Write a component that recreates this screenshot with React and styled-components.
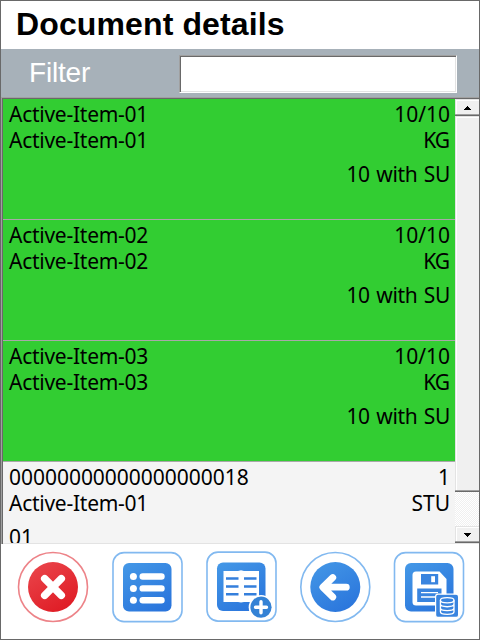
import React from "react";
import styled, { createGlobalStyle } from "styled-components";

const GlobalStyle = createGlobalStyle`
  *, *::before, *::after { box-sizing: border-box; }
  body { margin: 0; background: #fff; }
`;

const Screen = styled.main`
  width: 480px;
  height: 640px;
  display: flex;
  flex-direction: column;
  border: 1px solid #696969;
  background: #fff;
  overflow: hidden;
`;

const Title = styled.h1`
  flex: none;
  height: 48px;
  margin: 0;
  padding-left: 15px;
  font: bold 32px/46px "Liberation Sans", Arial, sans-serif;
  letter-spacing: 0.12px;
  color: #000;
  white-space: nowrap;
`;

const FilterBar = styled.div`
  flex: none;
  height: 48px;
  display: flex;
  align-items: flex-start;
  background: #a7b1b9;
`;

const FilterLabel = styled.label`
  width: 178px;
  padding-left: 28px;
  font: 28px/48px "Liberation Sans", Arial, sans-serif;
  letter-spacing: -0.2px;
  color: #fff;
`;

const FilterInput = styled.input`
  width: 278px;
  height: 38px;
  margin-top: 6px;
  padding: 0 4px;
  border: 1px solid;
  border-color: #a0a0a0 #fff #fff #a0a0a0;
  border-radius: 0;
  outline: none;
  background: #fff;
  box-shadow: inset 1px 1px #696969, inset -1px -1px #e3e3e3;
  font: 22px "Liberation Sans", Arial, sans-serif;
`;

const ListFrame = styled.section`
  flex: none;
  height: 447px;
  display: flex;
  padding: 2px 0 1px 2px;
  background: #f4f4f4;
  box-shadow: inset 1px 1px #a0a0a0, inset 2px 2px #696969, inset 0 -1px #e3e3e3;
`;

const Rows = styled.div`
  width: 452px;
  height: 444px;
  overflow: hidden;
`;

const Row = styled.article`
  height: 121px;
  padding: 2px 5px 0 6px;
  border-bottom: 1px solid #a8a8a8;
  background: ${(p) => (p.$complete ? "#32cd32" : "#f4f4f4")};
`;

const Line = styled.div`
  height: 26px;
  margin-top: ${(p) => (p.$spaced ? 8 : 0)}px;
  display: flex;
  justify-content: space-between;
  font: 21px/26px "Noto Sans", Tahoma, sans-serif;
  color: #000;
  white-space: nowrap;
`;

const Cell = styled.span`
  letter-spacing: ${(p) => p.$tracking || 0}px;
`;

const Unit = styled(Cell)`
  letter-spacing: ${(p) => (p.$narrow ? -1 : 0)}px;
  margin-right: ${(p) => (p.$narrow ? 1 : 0)}px;
`;

const Note = styled(Cell)`
  letter-spacing: -0.35px;
  word-spacing: 1.4px;
`;

const Scrollbar = styled.div`
  width: 24px;
  height: 444px;
  display: flex;
  flex-direction: column;
  background: repeating-conic-gradient(#f0f0f0 0% 25%, #fff 0% 50%) 0 0 / 2px 2px;
`;

const ScrollPart = styled.div`
  flex: none;
  height: ${(p) => p.$height}px;
  display: flex;
  align-items: center;
  justify-content: center;
  background: #f0f0f0;
  box-shadow: inset 0 -1px #696969, inset 0 -2px #a0a0a0, inset 1px 1px #e3e3e3, inset 2px 2px #fff;
`;

const Track = styled.div`
  flex: 1;
`;

const Toolbar = styled.nav`
  flex: 1;
  display: flex;
  gap: 22px;
  padding: 7px 0 0 16px;
`;

const ToolButton = styled.button`
  flex: none;
  width: 72px;
  height: 72px;
  padding: 0;
  border: 0;
  background: none;

  svg { display: block; }
`;

const items = [
  { code: "Active-Item-01", name: "Active-Item-01", qty: "10/10", unit: "KG", note: "10 with SU", complete: true },
  { code: "Active-Item-02", name: "Active-Item-02", qty: "10/10", unit: "KG", note: "10 with SU", complete: true },
  { code: "Active-Item-03", name: "Active-Item-03", qty: "10/10", unit: "KG", note: "10 with SU", complete: true },
  { code: "00000000000000000018", name: "Active-Item-01", qty: "1", unit: "STU", batch: "01" },
];

function Arrow({ down }) {
  return (
    <svg width="7" height="4" shapeRendering="crispEdges">
      <path d={down ? "M0 0h7v1h-1v1h-1v1h-1v1h-1v-1h-1v-1h-1v-1h-1z" : "M3 0h1v1h1v1h1v1h1v1h-7v-1h1v-1h1v-1h1z"} />
    </svg>
  );
}

function Icon({ id, red, round, left = 1.5, dx = 0, dy = 0, children }) {
  const edge = red ? "#ed8388" : "#82b9f0";
  return (
    <svg width="72" height="72" viewBox={`${-dx} ${-dy} 72 72`} fill="none" overflow="visible">
      <defs>
        <linearGradient id={id} x1="0.15" y1="0" x2="0.75" y2="1">
          <stop stopColor={red ? "#ea454b" : "#4396e6"} />
          <stop offset="1" stopColor={red ? "#df1b24" : "#2a75dc"} />
        </linearGradient>
      </defs>
      {round ? (
        <>
          <circle cx="36" cy="36" r="34.5" stroke={edge} strokeWidth="1.6" />
          <circle cx="36" cy="36" r="25" fill={`url(#${id})`} />
        </>
      ) : (
        <>
          <rect x={left} y="1.6" width="69" height="69" rx="11" stroke={edge} strokeWidth="1.6" />
          <rect x="12" y="12" width="48.5" height="48.5" rx="6" fill={`url(#${id})`} />
        </>
      )}
      {children}
    </svg>
  );
}

export default function App() {
  return (
    <Screen>
      <GlobalStyle />
      <Title>Document details</Title>
      <FilterBar>
        <FilterLabel htmlFor="filter">Filter</FilterLabel>
        <FilterInput id="filter" />
      </FilterBar>
      <ListFrame>
        <Rows>
          {items.map((item) => (
            <Row key={item.code} $complete={item.complete}>
              <Line><Cell $tracking={item.complete ? -0.26 : -0.03}>{item.code}</Cell><Cell>{item.qty}</Cell></Line>
              <Line><Cell $tracking={-0.26}>{item.name}</Cell><Unit $narrow={item.unit === "KG"}>{item.unit}</Unit></Line>
              <Line $spaced><Cell>{item.batch}</Cell><Note>{item.note}</Note></Line>
            </Row>
          ))}
        </Rows>
        <Scrollbar>
          <ScrollPart $height={17}><Arrow /></ScrollPart>
          <ScrollPart $height={376} />
          <Track />
          <ScrollPart $height={17}><Arrow down /></ScrollPart>
        </Scrollbar>
      </ListFrame>
      <Toolbar>
        <ToolButton aria-label="Cancel">
          <Icon id="cancel" red round>
            <path d="M27.7 27.7L44.3 44.3M44.3 27.7L27.7 44.3" stroke="#fff" strokeWidth="7.5" strokeLinecap="round" />
          </Icon>
        </ToolButton>
        <ToolButton aria-label="List">
          <Icon id="list" left={2}>
            <g fill="#fff">
              {[26.3, 38.2, 50.1].map((y) => (
                <React.Fragment key={y}>
                  <circle cx="22.4" cy={y - 0.8} r="3.5" />
                  <rect x="28.5" y={y - 4} width="25.2" height="6.4" rx="3.2" />
                </React.Fragment>
              ))}
            </g>
          </Icon>
        </ToolButton>
        <ToolButton aria-label="Add entry">
          <Icon id="add" left={2} dy={-0.5}>
            <path d="M18.5 20.5h14.5l3-.8 3 .8h15v31h-15l-3 .6-3-.6H18.5z" fill="#fff" />
            <path d="M21 28h12.5M39 28h12.5M21 36h12.5M39 36h12.5M21 43.7h12.5M39 43.7h12.5" stroke="#347fdc" strokeWidth="2.5" />
            <circle cx="56" cy="56.7" r="12.3" fill="#fff" />
            <circle cx="56" cy="56.7" r="10.6" fill="#3482d5" />
            <path d="M56 51.2v11M50.5 56.7h11" stroke="#fff" strokeWidth="3.4" strokeLinecap="round" />
          </Icon>
        </ToolButton>
        <ToolButton aria-label="Back">
          <Icon id="back" round dx={0.3}>
            <path d="M34.5 26.5L24.5 36.2L34.5 46M25 36.2H48" stroke="#fff" strokeWidth="6.8" strokeLinecap="round" strokeLinejoin="round" transform="translate(-1 0)" />
          </Icon>
        </ToolButton>
        <ToolButton aria-label="Save to database">
          <Icon id="save">
            <path d="M23 20.5h23.5l7 7.5v26.5H23q-3.5 0-3.5-3.5V24q0-3.5 3.5-3.5z" fill="#fff" />
            <path d="M28 23h17.2v10.5H28zM24.2 37.5h24.3v13.5H24.2z" fill="#3984df" />
            <path d="M38.2 25.2h3.8v6h-3.8z" fill="#fff" />
            <path d="M28 41.6h17M28 46h17" stroke="#fff" strokeWidth="1.4" />
            <rect x="42.6" y="43.2" width="23" height="23.2" rx="2.5" fill="#3984df" stroke="#fff" strokeWidth="1.2" />
            <g stroke="#fff" strokeWidth="1.3">
              <ellipse cx="54.2" cy="49.2" rx="6.8" ry="2.6" />
              <path d="M47.4 49.2v11.5c0 3.5 13.6 3.5 13.6 0V49.2M47.4 53.1c0 3.5 13.6 3.5 13.6 0M47.4 57c0 3.5 13.6 3.5 13.6 0" />
            </g>
          </Icon>
        </ToolButton>
      </Toolbar>
    </Screen>
  );
}
